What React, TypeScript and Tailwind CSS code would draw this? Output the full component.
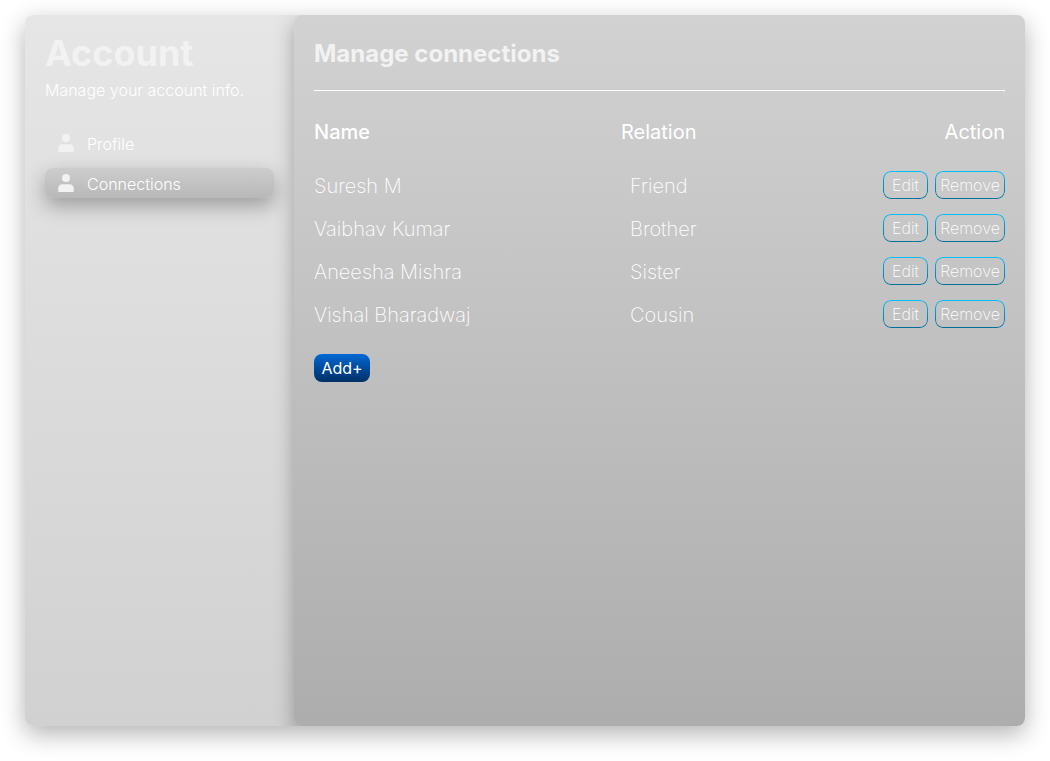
import React from "react";

type Connection = { name: string; relation: string };

const connections: Connection[] = [
  { name: "Suresh M", relation: "Friend" },
  { name: "Vaibhav Kumar", relation: "Brother" },
  { name: "Aneesha Mishra", relation: "Sister" },
  { name: "Vishal Bharadwaj", relation: "Cousin" },
];

function UserIcon() {
  return (
    <svg width="16" height="18" viewBox="0 0 16 18" fill="#f2f2f2" aria-hidden="true">
      <circle cx="8" cy="4" r="4" />
      <path d="M0.2 17.2V14.4a4.2 4.2 0 0 1 4.2-4.2h7.2a4.2 4.2 0 0 1 4.2 4.2V17.2q0 .8-.8.8H1q-.8 0-.8-.8z" />
    </svg>
  );
}

function NavItem({ label, active = false }: { label: string; active?: boolean }) {
  return (
    <a
      href="#"
      aria-current={active ? "page" : undefined}
      className={
        active
          ? "flex h-[30px] items-center gap-[13px] rounded-lg bg-linear-to-b from-[#cdcdcd] to-[#b8b8b8] pl-[13px] shadow-[0_8px_20px_rgba(0,0,0,0.3)]"
          : "flex h-[30px] items-center gap-[13px] rounded-lg pl-[13px]"
      }
    >
      <UserIcon />
      <span className="pt-0.5">{label}</span>
    </a>
  );
}

function OutlineButton({ children, label, wide = false }: { children: React.ReactNode; label: string; wide?: boolean }) {
  return (
    <button
      type="button"
      aria-label={label}
      className={
        (wide ? "w-[70px] " : "w-[45px] ") +
        "relative h-7 rounded-lg text-center text-base font-extralight before:pointer-events-none before:absolute before:inset-0 before:rounded-lg before:bg-linear-to-b before:from-[#00bfff] before:to-[#006f99] before:p-px before:[mask:linear-gradient(#000_0_0)_content-box_exclude,linear-gradient(#000_0_0)]"
      }
    >
      {children}
    </button>
  );
}

export default function App() {
  return (
    <div className="flex min-h-screen bg-white px-[25px] pt-[15px] pb-[35px] font-[Inter,sans-serif] text-white">
      <div className="flex flex-1 overflow-hidden rounded-lg bg-linear-to-b from-[#e6e6e6] to-[#d1d1d1] shadow-[0_8px_25px_rgba(0,0,0,0.3)]">
        <aside className="w-[269px] shrink-0 px-5 pt-[18px]">
          <h1 className="text-4xl font-bold text-[#f2f2f2]">Account</h1>
          <p className="mt-[5px] text-base font-light">Manage your account info.</p>
          <nav className="mt-[26px] flex flex-col gap-[10px] text-base font-light">
            <NavItem label="Profile" />
            <NavItem label="Connections" active />
          </nav>
        </aside>
        <main className="min-w-0 flex-1 rounded-lg bg-linear-to-b from-[#d2d2d2] to-[#adadad] px-5 shadow-[0_8px_20px_rgba(0,0,0,0.3)]">
          <h2 className="border-b border-white pt-[23px] pb-5 text-2xl font-bold text-[#f2f2f2]">
            Manage connections
          </h2>
          <table className="mt-[9px] w-full table-fixed text-xl font-extralight">
            <thead>
              <tr className="h-16 text-left">
                <th className="w-[307px] font-medium">Name</th>
                <th className="font-normal">Relation</th>
                <th className="text-right font-normal">Action</th>
              </tr>
            </thead>
            <tbody>
              {connections.map((c) => (
                <tr key={c.name} className="h-[43px]">
                  <td>{c.name}</td>
                  <td className="pl-[9px]">{c.relation}</td>
                  <td className="pb-0.5">
                    <div className="flex justify-end gap-[7px]">
                      <OutlineButton label={`Edit ${c.name}`}>Edit</OutlineButton>
                      <OutlineButton label={`Remove ${c.name}`} wide>
                        Remove
                      </OutlineButton>
                    </div>
                  </td>
                </tr>
              ))}
            </tbody>
          </table>
          <button
            type="button"
            className="mt-[18px] h-7 w-14 rounded-lg bg-linear-to-b from-[#0068d6] to-[#003066] text-center text-base"
          >
            Add+
          </button>
        </main>
      </div>
    </div>
  );
}
